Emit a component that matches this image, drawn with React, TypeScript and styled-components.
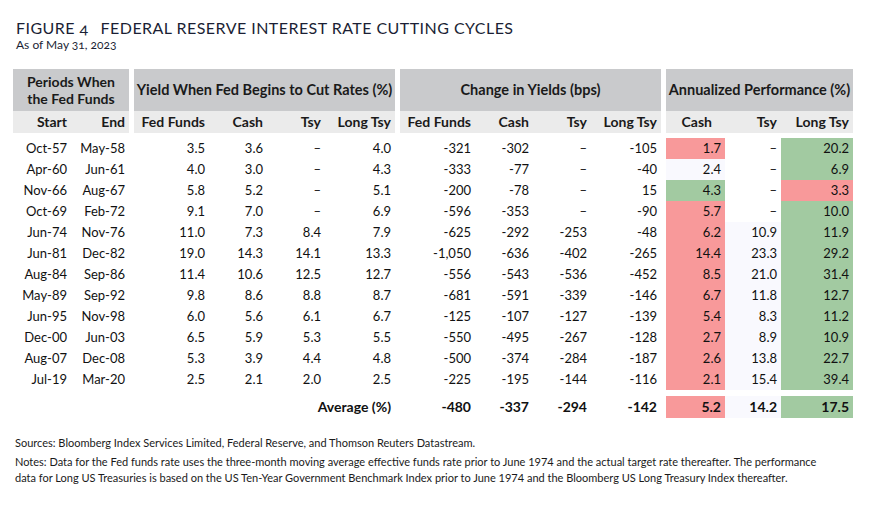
import React from 'react';
import styled, { createGlobalStyle } from 'styled-components';

type Tone = 'pink' | 'green' | 'soft' | 'none';

const TONES: Record<Tone, string> = {
  pink: '#f8999a',
  green: '#a2caa1',
  soft: '#f9f9fe',
  none: 'transparent',
};

const D = '–';

const periods = [
  ['Oct-57', 'May-58'],
  ['Apr-60', 'Jun-61'],
  ['Nov-66', 'Aug-67'],
  ['Oct-69', 'Feb-72'],
  ['Jun-74', 'Nov-76'],
  ['Jun-81', 'Dec-82'],
  ['Aug-84', 'Sep-86'],
  ['May-89', 'Sep-92'],
  ['Jun-95', 'Nov-98'],
  ['Dec-00', 'Jun-03'],
  ['Aug-07', 'Dec-08'],
  ['Jul-19', 'Mar-20'],
];

const yields = [
  ['3.5', '3.6', D, '4.0'],
  ['4.0', '3.0', D, '4.3'],
  ['5.8', '5.2', D, '5.1'],
  ['9.1', '7.0', D, '6.9'],
  ['11.0', '7.3', '8.4', '7.9'],
  ['19.0', '14.3', '14.1', '13.3'],
  ['11.4', '10.6', '12.5', '12.7'],
  ['9.8', '8.6', '8.8', '8.7'],
  ['6.0', '5.6', '6.1', '6.7'],
  ['6.5', '5.9', '5.3', '5.5'],
  ['5.3', '3.9', '4.4', '4.8'],
  ['2.5', '2.1', '2.0', '2.5'],
];

const changes = [
  ['-321', '-302', D, '-105'],
  ['-333', '-77', D, '-40'],
  ['-200', '-78', D, '15'],
  ['-596', '-353', D, '-90'],
  ['-625', '-292', '-253', '-48'],
  ['-1,050', '-636', '-402', '-265'],
  ['-556', '-543', '-536', '-452'],
  ['-681', '-591', '-339', '-146'],
  ['-125', '-107', '-127', '-139'],
  ['-550', '-495', '-267', '-128'],
  ['-500', '-374', '-284', '-187'],
  ['-225', '-195', '-144', '-116'],
];

type PerfCell = [string, Tone];

const performance: PerfCell[][] = [
  [['1.7', 'pink'], [D, 'none'], ['20.2', 'green']],
  [['2.4', 'soft'], [D, 'none'], ['6.9', 'green']],
  [['4.3', 'green'], [D, 'none'], ['3.3', 'pink']],
  [['5.7', 'pink'], [D, 'none'], ['10.0', 'green']],
  [['6.2', 'pink'], ['10.9', 'soft'], ['11.9', 'green']],
  [['14.4', 'pink'], ['23.3', 'soft'], ['29.2', 'green']],
  [['8.5', 'pink'], ['21.0', 'soft'], ['31.4', 'green']],
  [['6.7', 'pink'], ['11.8', 'soft'], ['12.7', 'green']],
  [['5.4', 'pink'], ['8.3', 'soft'], ['11.2', 'green']],
  [['2.7', 'pink'], ['8.9', 'soft'], ['10.9', 'green']],
  [['2.6', 'pink'], ['13.8', 'soft'], ['22.7', 'green']],
  [['2.1', 'pink'], ['15.4', 'soft'], ['39.4', 'green']],
];

const perfAverage: PerfCell[] = [
  ['5.2', 'pink'],
  ['14.2', 'soft'],
  ['17.5', 'green'],
];

const App = () => {
  return (
    <Page>
      <GlobalStyle />
      <Title>
        <span>FIGURE 4</span>
        <span>FEDERAL RESERVE INTEREST RATE CUTTING CYCLES</span>
      </Title>
      <Subtitle>As of May 31, 2023</Subtitle>

      <Table>
        <Group>
          <GroupHead $twoLines>
            Periods When
            <br />
            the Fed Funds
          </GroupHead>
          <SubHead $cols="58px 58px">
            <HeadCell>Start</HeadCell>
            <HeadCell>End</HeadCell>
          </SubHead>
          <Body $cols="58px 58px">
            {periods.map(([start, end]) => (
              <React.Fragment key={start}>
                <Cell>{start}</Cell>
                <Cell>{end}</Cell>
              </React.Fragment>
            ))}
          </Body>
          <AverageRow $cols="116px" />
        </Group>

        <Group>
          <GroupHead>Yield When Fed Begins to Cut Rates (%)</GroupHead>
          <SubHead $cols="75px 58px 58px 70px">
            <HeadCell>Fed Funds</HeadCell>
            <HeadCell>Cash</HeadCell>
            <HeadCell>Tsy</HeadCell>
            <HeadCell>Long Tsy</HeadCell>
          </SubHead>
          <Body $cols="75px 58px 58px 70px">
            {yields.map((row, i) =>
              row.map((value, j) => <Cell key={`${i}-${j}`}>{value}</Cell>)
            )}
          </Body>
          <AverageRow $cols="261px">
            <Cell $bold>Average (%)</Cell>
          </AverageRow>
        </Group>

        <Group>
          <GroupHead>Change in Yields (bps)</GroupHead>
          <SubHead $cols="75px 58px 58px 70px">
            <HeadCell>Fed Funds</HeadCell>
            <HeadCell>Cash</HeadCell>
            <HeadCell>Tsy</HeadCell>
            <HeadCell>Long Tsy</HeadCell>
          </SubHead>
          <Body $cols="75px 58px 58px 70px">
            {changes.map((row, i) =>
              row.map((value, j) => <Cell key={`${i}-${j}`}>{value}</Cell>)
            )}
          </Body>
          <AverageRow $cols="75px 58px 58px 70px">
            <Cell $bold>-480</Cell>
            <Cell $bold>-337</Cell>
            <Cell $bold>-294</Cell>
            <Cell $bold>-142</Cell>
          </AverageRow>
        </Group>

        <Group>
          <GroupHead>Annualized Performance (%)</GroupHead>
          <SubHead $cols="59px 56px 72px">
            <HeadCell $pad={13}>Cash</HeadCell>
            <HeadCell>Tsy</HeadCell>
            <HeadCell>Long Tsy</HeadCell>
          </SubHead>
          <Body $cols="59px 56px 72px">
            {performance.map((row, i) =>
              row.map(([value, tone], j) => (
                <Cell key={`${i}-${j}`} $tone={tone}>
                  {value}
                </Cell>
              ))
            )}
          </Body>
          <AverageRow $cols="59px 56px 72px">
            {perfAverage.map(([value, tone]) => (
              <Cell key={value} $tone={tone} $bold>
                {value}
              </Cell>
            ))}
          </AverageRow>
        </Group>
      </Table>

      <Footnotes>
        <p>Sources: Bloomberg Index Services Limited, Federal Reserve, and Thomson Reuters Datastream.</p>
        <p>
          Notes: Data for the Fed funds rate uses the three-month moving average effective funds rate prior
          to June 1974 and the actual target rate thereafter. The performance
          <br />
          data for Long US Treasuries is based on the US Ten-Year Government Benchmark Index prior to June
          1974 and the Bloomberg US Long Treasury Index thereafter.
        </p>
      </Footnotes>
    </Page>
  );
};

const GlobalStyle = createGlobalStyle`
  body {
    margin: 0;
    background: #ffffff;
    font-family: Lato, 'Liberation Sans', sans-serif;
    color: #111111;
  }
`;

const Page = styled.div`
  width: 880px;
  height: 511px;
  padding: 18px 0 0 13px;
  box-sizing: border-box;
`;

const Title = styled.h1`
  display: flex;
  gap: 12px;
  margin: 0 0 0 3px;
  font-size: 16px;
  line-height: 20px;
  font-weight: 400;
  letter-spacing: 0.45px;
  color: #1b1f35;
  font-variant-numeric: oldstyle-nums;
  white-space: nowrap;
`;

const Subtitle = styled.div`
  margin: 0 0 17px 3px;
  font-size: 12px;
  line-height: 14px;
  color: #1b1f35;
  font-variant-numeric: oldstyle-nums;
`;

const Table = styled.div`
  display: flex;
  gap: 5px;
  align-items: flex-start;
`;

const Group = styled.div`
  display: flex;
  flex-direction: column;
`;

const GroupHead = styled.div<{ $twoLines?: boolean }>`
  height: 42px;
  display: flex;
  align-items: center;
  justify-content: center;
  text-align: center;
  background: #c9cacc;
  font-size: ${p => (p.$twoLines ? '14px' : '14.5px')};
  font-weight: 700;
  line-height: ${p => (p.$twoLines ? '17px' : '20px')};
  color: #1a1a1a;
  white-space: nowrap;
`;

const Row = styled.div<{ $cols: string }>`
  display: grid;
  grid-template-columns: ${p => p.$cols};
`;

const SubHead = styled(Row)`
  height: 22px;
  background: #ebebeb;
`;

const Body = styled(Row)`
  margin-top: 5px;
  grid-auto-rows: 21px;
`;

const AverageRow = styled(Row)`
  margin-top: 6px;
  height: 22px;
`;

const HeadCell = styled.div<{ $pad?: number }>`
  padding-right: ${p => p.$pad ?? 4}px;
  text-align: right;
  font-size: 14px;
  font-weight: 700;
  line-height: 22px;
  color: #1a1a1a;
  white-space: nowrap;
`;

const Cell = styled.div<{ $tone?: Tone; $bold?: boolean }>`
  padding-right: 4px;
  text-align: right;
  font-size: ${p => (p.$bold ? '14px' : '13px')};
  line-height: ${p => (p.$bold ? '22px' : '21px')};
  font-weight: ${p => (p.$bold ? 700 : 400)};
  background: ${p => TONES[p.$tone ?? 'none']};
  color: #111111;
  white-space: nowrap;
`;

const Footnotes = styled.div`
  margin: 17px 0 0 2px;
  font-size: 11px;
  line-height: 16px;
  color: #1a1a1a;

  > p {
    margin: 0;
    white-space: nowrap;
  }

  > p + p {
    margin-top: 3px;
  }
`;

export default App;
